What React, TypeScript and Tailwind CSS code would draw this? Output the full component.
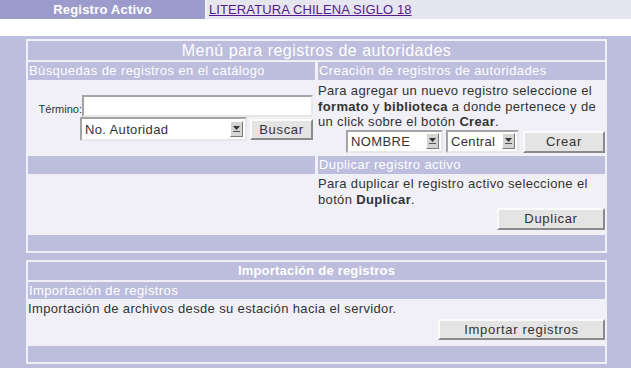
import React from "react";

const Arrow = () => (
  <span className="flex h-[16px] w-[13px] shrink-0 items-center justify-center border border-t-white border-l-white border-b-[#7a7a7a] border-r-[#7a7a7a] bg-[#d4d4d4]">
    <svg width="7" height="6" viewBox="0 0 7 6">
      <path d="M0 0 L7 0 L3.5 4 Z" fill="#333" />
      <rect x="0" y="5" width="7" height="1" fill="#555" />
    </svg>
  </span>
);

const Select = ({ w, label }: { w: string; label: string }) => (
  <div
    className={`${w} flex h-[23px] items-center border-2 border-t-[#a4a4a4] border-l-[#a4a4a4] border-b-[#e8e8e8] border-r-[#e8e8e8] bg-white`}
  >
    <span className="flex-1 overflow-hidden whitespace-nowrap pl-[3px] text-[13px] leading-[19px] text-[#333]">
      {label}
    </span>
    <span className="mr-[2px]">
      <Arrow />
    </span>
  </div>
);

const Button = ({ w, h, label }: { w: string; h: string; label: string }) => (
  <div
    className={`${w} ${h} flex items-center justify-center border-2 border-t-[#fafafa] border-l-[#fafafa] border-b-[#8a8a8a] border-r-[#8a8a8a] bg-[#e4e4e4] text-[13px] tracking-[0.7px] text-[#333]`}
  >
    {label}
  </div>
);

const Sub = ({ children, className = "" }: { children?: React.ReactNode; className?: string }) => (
  <div className={`bg-[#bdbddd] pl-[1px] text-[13px] tracking-[0.4px] text-white ${className}`}>{children}</div>
);

export default function App() {
  return (
    <div
      className="h-[368px] w-[631px] overflow-hidden bg-[#bdbddd] tracking-[0.35px]"
      style={{ fontFamily: '"Liberation Sans", Arial, sans-serif' }}
    >
      {/* top bar */}
      <div className="flex h-[19px] bg-[#f0f0f6]">
        <div className="flex w-[205px] items-center justify-center bg-[#9c9ccc] text-[13px] font-bold tracking-[0.2px] text-white">
          Registro Activo
        </div>
        <div className="ml-[2px] flex flex-1 items-center bg-[#e6e6f0] pl-[2px] text-[13px] tracking-[0.1px]">
          <a href="#" className="text-[#551a8b] underline">
            LITERATURA CHILENA SIGLO 18
          </a>
        </div>
      </div>
      <div className="h-[17px] bg-white" />

      <div className="flex flex-col gap-[7px] pl-[26px] pr-[24px] pt-[3px]">
        {/* panel 1 */}
        <div className="grid grid-cols-[287px_287px] grid-rows-[19px_18px_72px_18px_57px_16px] gap-x-[3px] gap-y-[2px] bg-[#f0f0f6] p-[2px]">
          <div className="col-span-2 flex items-center justify-center bg-[#bdbddd] text-[16px] tracking-[0.5px] text-white">
            Menú para registros de autoridades
          </div>
          <Sub className="leading-[18px]">Búsquedas de registros en el catálogo</Sub>
          <Sub className="leading-[18px]">Creación de registros de autoridades</Sub>

          {/* search */}
          <div className="flex pt-[13px]">
            <div className="w-[54px] pt-[6px] text-right text-[11px] tracking-normal text-[#333]">Término:</div>
            <div className="flex flex-col">
              <div className="h-[22px] w-[231px] border-2 border-t-[#a4a4a4] border-l-[#a4a4a4] border-b-[#e8e8e8] border-r-[#e8e8e8] bg-white" />
              <div className="-ml-[2px] flex items-start gap-[3px]">
                <Select w="w-[167px] h-[24px]" label="No. Autoridad" />
                <div className="pt-[2px]">
                  <Button w="w-[63px]" h="h-[21px]" label="Buscar" />
                </div>
              </div>
            </div>
          </div>

          {/* create */}
          <div className="flex flex-col">
            <p className="pt-[1px] pr-[4px] text-[13px] leading-[15.5px] text-[#333]">
              Para agregar un nuevo registro seleccione el <b>formato</b> y <b>biblioteca</b> a donde pertenece y de
              un click sobre el botón <b>Crear</b>.
            </p>
            <div className="flex items-start justify-end">
              <Select w="w-[97px]" label="NOMBRE" />
              <div className="ml-[3px]">
                <Select w="w-[73px]" label="Central" />
              </div>
              <div className="ml-[4px] pt-[1px]">
                <Button w="w-[82px]" h="h-[22px]" label="Crear" />
              </div>
            </div>
          </div>

          <Sub />
          <Sub className="leading-[18px]">Duplicar registro activo</Sub>

          <div />
          <div className="flex flex-col">
            <p className="text-[13px] leading-[16px] text-[#333]">
              Para duplicar el registro activo seleccione el botón <b>Duplicar</b>.
            </p>
            <div className="flex justify-end">
              <Button w="w-[108px]" h="h-[22px]" label="Duplicar" />
            </div>
          </div>

          <div className="col-span-2 bg-[#bdbddd]" />
        </div>

        {/* panel 2 */}
        <div className="grid grid-rows-[18px_17px_43px_16px] gap-y-[2px] bg-[#f0f0f6] p-[2px]">
          <div className="flex items-center justify-center bg-[#bdbddd] text-[13px] font-bold tracking-[0.2px] text-white">
            Importación de registros
          </div>
          <Sub className="leading-[17px]">Importación de registros</Sub>
          <div className="flex flex-col">
            <p className="text-[13px] leading-[16px] text-[#333]">
              Importación de archivos desde su estación hacia el servidor.
            </p>
            <div className="mt-[2px] flex justify-end">
              <Button w="w-[167px]" h="h-[21px]" label="Importar registros" />
            </div>
          </div>
          <div className="bg-[#bdbddd]" />
        </div>
      </div>
    </div>
  );
}
